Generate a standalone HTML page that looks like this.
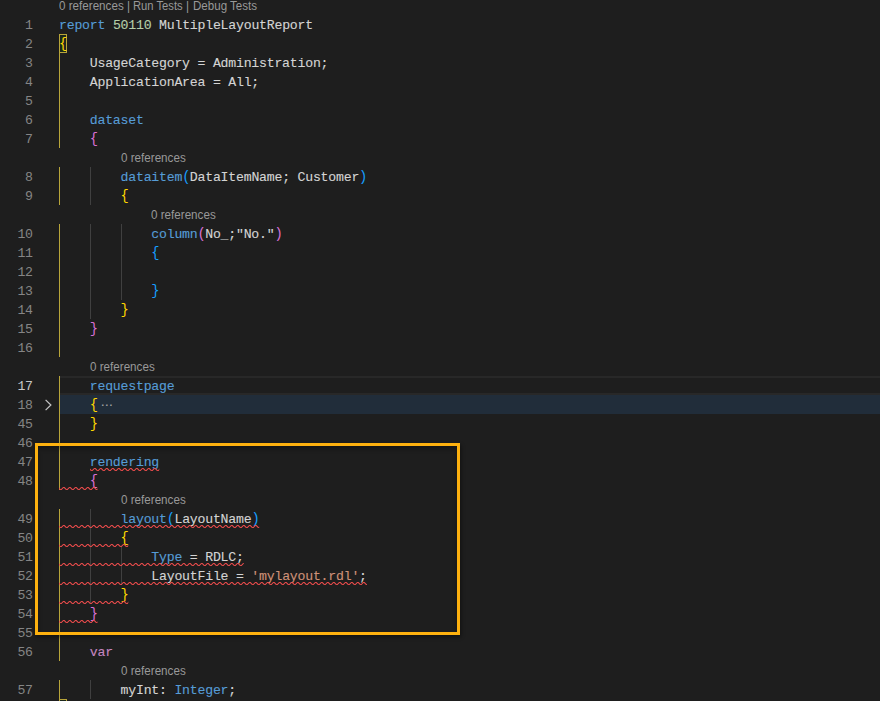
<!DOCTYPE html>
<html lang="en"><head><meta charset="utf-8"><title>MultipleLayoutReport.al</title>
<style>
html,body{margin:0;padding:0;background:#1e1e1e;}
body{width:880px;height:701px;overflow:hidden;position:relative;font-family:"Liberation Mono","DejaVu Sans Mono",monospace;font-size:13.2px;color:#d4d4d4;}
.row{position:absolute;left:0;width:880px;height:19px;line-height:19px;}
.ln{position:absolute;left:0;top:1px;width:32.8px;text-align:right;color:#858585;letter-spacing:-0.22px;white-space:pre;}
.ln.act{color:#c6c6c6;}
.code{position:absolute;left:59px;top:1px;white-space:pre;letter-spacing:-0.22px;-webkit-text-stroke:0.12px;}
.lens{position:absolute;top:1px;white-space:pre;font-family:"Liberation Sans","DejaVu Sans",sans-serif;font-size:12px;color:#999;line-height:19px;transform-origin:0 0;transform:scaleX(.97);}
.g{position:absolute;top:0;width:1px;height:19px;background:#404040;}
.gy{background:#b8a53a;}
.cur{position:absolute;left:59px;right:0;top:0;height:15px;border-top:2px solid #282828;border-bottom:2px solid #282828;}
.fold{position:absolute;left:59px;right:0;top:0;height:19px;background:#212d3a;}
.match{position:absolute;top:0;width:6px;height:17px;border:1px solid #b8a53a;background:#1c281c;}
.b{font-size:13.8px;letter-spacing:-0.581px;line-height:1px;-webkit-text-stroke:0;}
.dots{color:#a8a8a8;font-family:"DejaVu Sans","Liberation Sans",sans-serif;font-size:12px;letter-spacing:0;display:inline-block;margin-left:3px;position:relative;top:0px;}
#anno{position:absolute;left:35px;top:443px;width:419px;height:186px;border:3px solid #fdb10f;box-shadow:1px 2px 4px rgba(0,0,0,.45), inset 0 3px 4px rgba(0,0,0,.28);}
svg{position:absolute;overflow:visible;}
</style></head><body>
<svg width="0" height="0" style="left:0;top:0"><defs><pattern id="sq" x="0" y="0" width="6" height="3" patternUnits="userSpaceOnUse"><g fill="#f14c4c"><polygon points="5.5,0 2.5,3 1.1,3 4.1,0"/><polygon points="4,0 6,2 6,0.6 5.4,0"/><polygon points="0,2 1,3 2.4,3 0,0.6"/></g></pattern></defs></svg>
<div class="row" style="top:-4px"><span class="lens" style="left:59.3px">0 references</span><span class="lens" style="left:126.6px">|</span><span class="lens" style="left:133.1px;transform:scaleX(.935)">Run Tests</span><span class="lens" style="left:186.3px">|</span><span class="lens" style="left:193px;transform:scaleX(.963)">Debug Tests</span></div>
<div class="row" style="top:15px"><span class="ln">1</span><span class="code"><span style="color:#569cd6">report</span> <span style="color:#b5cea8">50110</span> MultipleLayoutReport</span></div>
<div class="row" style="top:34px"><div class="match" style="left:59.0px"></div><span class="ln">2</span><span class="code"><span class="b" style="color:#ffd700">{</span></span></div>
<div class="row" style="top:53px"><i class="g gy" style="left:59px"></i><span class="ln">3</span><span class="code">    UsageCategory = Administration;</span></div>
<div class="row" style="top:72px"><i class="g gy" style="left:59px"></i><span class="ln">4</span><span class="code">    ApplicationArea = All;</span></div>
<div class="row" style="top:91px"><i class="g gy" style="left:59px"></i><span class="ln">5</span><span class="code"></span></div>
<div class="row" style="top:110px"><i class="g gy" style="left:59px"></i><span class="ln">6</span><span class="code">    <span style="color:#569cd6">dataset</span></span></div>
<div class="row" style="top:129px"><i class="g gy" style="left:59px"></i><span class="ln">7</span><span class="code">    <span class="b" style="color:#da70d6">{</span></span></div>
<div class="row" style="top:148px"><span class="lens" style="left:120.6px">0 references</span></div>
<div class="row" style="top:167px"><i class="g gy" style="left:59px"></i><i class="g" style="left:90px"></i><span class="ln">8</span><span class="code">        <span style="color:#569cd6">dataitem</span><span class="b" style="color:#179fff">(</span>DataItemName; Customer<span class="b" style="color:#179fff">)</span></span></div>
<div class="row" style="top:186px"><i class="g gy" style="left:59px"></i><i class="g" style="left:90px"></i><span class="ln">9</span><span class="code">        <span class="b" style="color:#ffd700">{</span></span></div>
<div class="row" style="top:205px"><span class="lens" style="left:150.6px">0 references</span></div>
<div class="row" style="top:224px"><i class="g gy" style="left:59px"></i><i class="g" style="left:90px"></i><i class="g" style="left:121px"></i><span class="ln">10</span><span class="code">            <span style="color:#569cd6">column</span><span class="b" style="color:#da70d6">(</span>No_;"No."<span class="b" style="color:#da70d6">)</span></span></div>
<div class="row" style="top:243px"><i class="g gy" style="left:59px"></i><i class="g" style="left:90px"></i><i class="g" style="left:121px"></i><span class="ln">11</span><span class="code">            <span class="b" style="color:#179fff">{</span></span></div>
<div class="row" style="top:262px"><i class="g gy" style="left:59px"></i><i class="g" style="left:90px"></i><i class="g" style="left:121px"></i><span class="ln">12</span><span class="code"></span></div>
<div class="row" style="top:281px"><i class="g gy" style="left:59px"></i><i class="g" style="left:90px"></i><i class="g" style="left:121px"></i><span class="ln">13</span><span class="code">            <span class="b" style="color:#179fff">}</span></span></div>
<div class="row" style="top:300px"><i class="g gy" style="left:59px"></i><i class="g" style="left:90px"></i><span class="ln">14</span><span class="code">        <span class="b" style="color:#ffd700">}</span></span></div>
<div class="row" style="top:319px"><i class="g gy" style="left:59px"></i><span class="ln">15</span><span class="code">    <span class="b" style="color:#da70d6">}</span></span></div>
<div class="row" style="top:338px"><i class="g gy" style="left:59px"></i><span class="ln">16</span><span class="code"></span></div>
<div class="row" style="top:357px"><span class="lens" style="left:89.6px">0 references</span></div>
<div class="row" style="top:376px"><div class="cur"></div><i class="g gy" style="left:59px"></i><span class="ln act">17</span><span class="code">    <span style="color:#569cd6">requestpage</span></span></div>
<div class="row" style="top:395px"><div class="fold"></div><i class="g gy" style="left:59px"></i><span class="ln">18</span><svg width="8" height="12" style="left:44px;top:4px" viewBox="0 0 8 12"><path d="M1.6 0.9 L6.9 6 L1.6 11.1" fill="none" stroke="#c5c5c5" stroke-width="1.2"/></svg><span class="code">    <span class="b" style="color:#ffd700">{</span><span class="dots">⋯</span></span></div>
<div class="row" style="top:414px"><i class="g gy" style="left:59px"></i><span class="ln">45</span><span class="code">    <span class="b" style="color:#ffd700">}</span></span></div>
<div class="row" style="top:433px"><i class="g gy" style="left:59px"></i><span class="ln">46</span><span class="code"></span></div>
<div class="row" style="top:452px"><i class="g gy" style="left:59px"></i><span class="ln">47</span><span class="code">    <span style="color:#569cd6">rendering</span></span><svg x="0" y="0" width="69.3" height="3" style="left:89.8px;top:16px"><rect width="69.3" height="3" fill="url(#sq)"/></svg></div>
<div class="row" style="top:471px"><i class="g gy" style="left:59px"></i><span class="ln">48</span><span class="code">    <span class="b" style="color:#da70d6">{</span></span><svg x="0" y="0" width="38.5" height="3" style="left:59.0px;top:16px"><rect width="38.5" height="3" fill="url(#sq)"/></svg></div>
<div class="row" style="top:490px"><span class="lens" style="left:120.6px">0 references</span></div>
<div class="row" style="top:509px"><i class="g gy" style="left:59px"></i><i class="g" style="left:90px"></i><span class="ln">49</span><span class="code">        <span style="color:#569cd6">layout</span><span class="b" style="color:#179fff">(</span>LayoutName<span class="b" style="color:#179fff">)</span></span><svg x="0" y="0" width="200.2" height="3" style="left:59.0px;top:16px"><rect width="200.2" height="3" fill="url(#sq)"/></svg></div>
<div class="row" style="top:528px"><i class="g gy" style="left:59px"></i><i class="g" style="left:90px"></i><span class="ln">50</span><span class="code">        <span class="b" style="color:#ffd700">{</span></span><svg x="0" y="0" width="69.3" height="3" style="left:59.0px;top:16px"><rect width="69.3" height="3" fill="url(#sq)"/></svg></div>
<div class="row" style="top:547px"><i class="g gy" style="left:59px"></i><i class="g" style="left:90px"></i><i class="g" style="left:121px"></i><span class="ln">51</span><span class="code">            <span style="color:#569cd6">Type</span> = RDLC;</span><svg x="0" y="0" width="184.8" height="3" style="left:59.0px;top:16px"><rect width="184.8" height="3" fill="url(#sq)"/></svg></div>
<div class="row" style="top:566px"><i class="g gy" style="left:59px"></i><i class="g" style="left:90px"></i><i class="g" style="left:121px"></i><span class="ln">52</span><span class="code">            LayoutFile = <span style="color:#ce9178">'mylayout.rdl'</span>;</span><svg x="0" y="0" width="308.0" height="3" style="left:59.0px;top:16px"><rect width="308.0" height="3" fill="url(#sq)"/></svg></div>
<div class="row" style="top:585px"><i class="g gy" style="left:59px"></i><i class="g" style="left:90px"></i><span class="ln">53</span><span class="code">        <span class="b" style="color:#ffd700">}</span></span><svg x="0" y="0" width="69.3" height="3" style="left:59.0px;top:16px"><rect width="69.3" height="3" fill="url(#sq)"/></svg></div>
<div class="row" style="top:604px"><i class="g gy" style="left:59px"></i><span class="ln">54</span><span class="code">    <span class="b" style="color:#da70d6">}</span></span><svg x="0" y="0" width="38.5" height="3" style="left:59.0px;top:16px"><rect width="38.5" height="3" fill="url(#sq)"/></svg></div>
<div class="row" style="top:623px"><i class="g gy" style="left:59px"></i><span class="ln">55</span><span class="code"></span></div>
<div class="row" style="top:642px"><i class="g gy" style="left:59px"></i><span class="ln">56</span><span class="code">    <span style="color:#c586c0">var</span></span></div>
<div class="row" style="top:661px"><span class="lens" style="left:120.6px">0 references</span></div>
<div class="row" style="top:680px"><i class="g gy" style="left:59px"></i><i class="g" style="left:90px"></i><span class="ln">57</span><span class="code">        myInt: <span style="color:#569cd6">Integer</span>;</span></div>
<div class="row" style="top:699px"><div class="match" style="left:59.0px"></div><span class="ln">58</span><span class="code"><span class="b" style="color:#ffd700">}</span></span></div>
<div id="anno"></div>
</body></html>
